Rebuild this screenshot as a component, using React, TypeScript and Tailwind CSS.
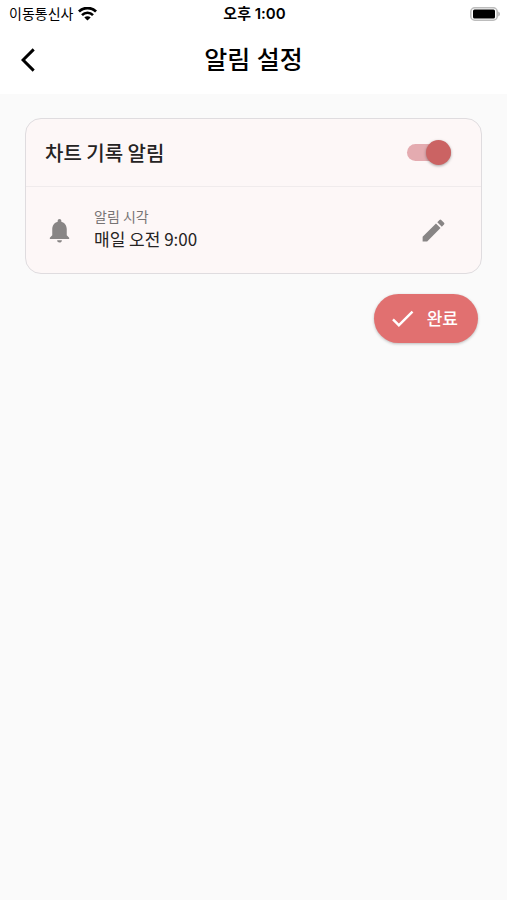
import React, { useState } from 'react';
import { MdArrowBackIosNew, MdCheck, MdEdit, MdNotifications } from 'react-icons/md';

const StatusBar: React.FC = () => {
  return (
    <div className="grid grid-cols-3 items-center h-7 pl-[9px] pr-[7px] text-black">
      <div className="flex items-center gap-[5px] text-sm leading-[26px] whitespace-nowrap">
        <span>이동통신사</span>
        <svg className="w-[19px] h-[14px]" viewBox="0 0 18 13" fill="none" aria-hidden="true">
          <path d="M0.9 4.2a11.5 11.5 0 0 1 16.2 0" stroke="black" strokeWidth="2.6" />
          <path d="M3.8 7.5a7.3 7.3 0 0 1 10.4 0" stroke="black" strokeWidth="2.5" />
          <path d="M9 12.7L6 9.8a4.2 4.2 0 0 1 6 0z" fill="black" />
        </svg>
      </div>
      <div className="text-center text-[15px] leading-[26px] font-semibold whitespace-nowrap">오후 1:00</div>
      <svg className="justify-self-end w-[30px] h-[14px]" viewBox="0 0 30 14" aria-hidden="true">
        <rect x="0.8" y="0.8" width="26.4" height="12.4" rx="4" fill="white" stroke="#bcbcbc" strokeWidth="1.6" />
        <rect x="3" y="2.5" width="22" height="9" rx="1.5" fill="black" />
        <path d="M28.4 4.6c1.8.8 1.8 4 0 4.8z" fill="#a3a3a3" />
      </svg>
    </div>
  );
};

const Header: React.FC = () => {
  return (
    <header className="grid grid-cols-[56px_1fr_56px] items-center h-16">
      <button type="button" aria-label="뒤로" className="pl-[14px] text-black">
        <MdArrowBackIosNew size={28} />
      </button>
      <h1 className="text-center text-[25px] leading-8 font-medium text-black">알림 설정</h1>
    </header>
  );
};

const App: React.FC = () => {
  const [enabled, setEnabled] = useState(true);

  return (
    <div className="min-h-screen bg-[#fafafa] font-['Inter','Noto_Sans_CJK_KR',sans-serif]">
      <div className="bg-white pb-[2px]">
        <StatusBar />
        <Header />
      </div>

      <main className="flex flex-col items-end gap-5 px-[25px] pt-6 font-['Noto_Sans_CJK_KR',sans-serif]">
        <section className="w-full rounded-2xl border border-[#dfdcdf] bg-[#fdf7f7]">
          {/* Reminder switch */}
          <label className="flex items-center justify-between h-[67px] pl-[19px] pr-[30px] cursor-pointer">
            <span className="text-xl font-medium text-[#252323]">차트 기록 알림</span>
            <span className="relative flex items-center w-[44px] h-[25px]">
              <input
                type="checkbox"
                role="switch"
                checked={enabled}
                onChange={(e) => setEnabled(e.target.checked)}
                className="peer appearance-none w-full h-[17px] rounded-full bg-gray-300 checked:bg-[#e4abb0] cursor-pointer"
              />
              <span className="absolute left-0 top-0 size-[25px] rounded-full bg-white shadow-[0_1px_3px_rgba(0,0,0,0.35)] transition peer-checked:translate-x-[19px] peer-checked:bg-[#cb6363] pointer-events-none" />
            </span>
          </label>

          {/* Reminder time */}
          <div className="flex items-center h-[87px] border-t border-[#f0ebec] pl-[19px] pr-[33px]">
            <MdNotifications size={29} className="text-[#888585]" />
            <div className="flex-1 pl-5 pb-[6px]">
              <p className="text-sm leading-[22px] text-[#777474]">알림 시각</p>
              <p className="text-[17px] leading-[23px] text-[#252323]">매일 오전 9:00</p>
            </div>
            <button type="button" aria-label="시각 수정" className="text-[#888585]">
              <MdEdit size={29} />
            </button>
          </div>
        </section>

        <button
          type="button"
          className="flex items-center gap-[10px] h-[49px] mr-1 pl-[14px] pr-5 rounded-full bg-[#e17070] text-white text-[17px] font-medium shadow-[0_1px_3px_rgba(0,0,0,0.25)]"
        >
          <MdCheck size={29} />
          <span className="pb-[2px]">완료</span>
        </button>
      </main>
    </div>
  );
};

export default App;
